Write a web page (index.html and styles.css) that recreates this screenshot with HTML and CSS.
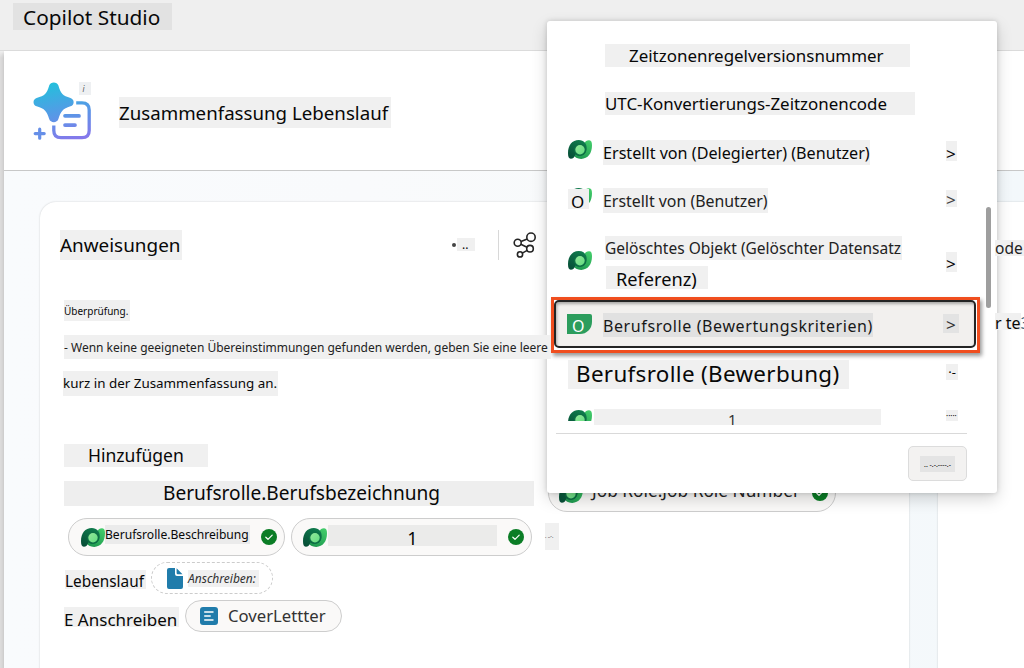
FILE: index.html
```html
<!DOCTYPE html>
<html lang="de">
<head>
<meta charset="utf-8">
<title>Copilot Studio</title>
<link rel="stylesheet" href="styles.css">
</head>
<body>
<svg class="defs" width="0" height="0" aria-hidden="true">
  <defs>
    <linearGradient id="gDark" x1="0.6" y1="0" x2="0" y2="1"><stop offset="0" stop-color="#0f7a4c"/><stop offset="1" stop-color="#064a35"/></linearGradient>
    <linearGradient id="gLeaf" x1="1" y1="0" x2="0.4" y2="1"><stop offset="0" stop-color="#45d06c"/><stop offset="1" stop-color="#1f9a50"/></linearGradient>
    <linearGradient id="gCore" x1="0" y1="0" x2="1" y2="1"><stop offset="0" stop-color="#94e89a"/><stop offset="1" stop-color="#62dc80"/></linearGradient>
    <symbol id="dataverse" viewBox="0 0 24 19">
      <path fill="url(#gLeaf)" d="M21.2.3C23.5.4 24 2.4 24 5.6 24 13.4 19.9 18.9 13.2 18.9 9.2 18.9 6.4 17.2 5.6 15L16.5 3.5C17.2 1.3 19 .2 21.2.3Z"/>
      <path fill="url(#gDark)" d="M10.8 0C15.9 0 19 3.6 18.7 8.8 18.4 13.2 15.6 15.7 12.2 15.8 10.2 15.8 8.6 15.2 7.4 14.2 6.6 17.2 5 18.7 2.8 18.7.7 18.7 0 16.7 0 13.1 0 5.3 4.2 0 10.8 0Z"/>
      <circle cx="12" cy="9.7" r="6.1" fill="#0d7045"/>
      <circle cx="12" cy="9.7" r="4.7" fill="url(#gCore)"/>
    </symbol>
    <symbol id="check" viewBox="0 0 16 16">
      <circle cx="8" cy="8" r="8" fill="#0b7d26"/>
      <path d="M4.8 8.2 7 10.3 11.2 6.1" fill="none" stroke="#fff" stroke-width="1.2" stroke-linecap="round" stroke-linejoin="round"/>
    </symbol>
  </defs>
</svg>

<div class="app">
  <header class="topbar"><span class="tag brand">Copilot Studio</span></header>
  <main class="panel">
    <section class="title-bar">
      <svg class="logo" viewBox="0 0 60 60">
        <defs><linearGradient id="gLogo" gradientUnits="userSpaceOnUse" x1="25" y1="0" x2="38" y2="58"><stop offset="0" stop-color="#24bfdc"/><stop offset=".5" stop-color="#549be6"/><stop offset="1" stop-color="#8578eb"/></linearGradient></defs>
        <path fill="url(#gLogo)" d="M16.2 3.5C17.5-.5 24.1-.5 25.4 3.5 28 12 29.5 13.6 37.5 16 41.7 17.3 41.7 23 37.5 24.3 29.5 26.8 28 29.3 25.4 37 24.1 41.2 17.5 41.2 16.2 37 13.6 29.3 12.1 26.8 3.6 24.3-.5 23-.5 17.3 3.6 16 12.1 13.6 13.6 12 16.2 3.5Z"/>
        <path fill="none" stroke="url(#gLogo)" stroke-width="3.3" d="M43.2 20.8H49Q56.2 20.8 56.2 28V48.5Q56.2 55.7 49 55.7H28Q20.8 55.7 20.8 48.5V43.5"/>
        <path fill="none" stroke="url(#gLogo)" stroke-width="3.7" stroke-linecap="round" d="M32 33.8 46 33.9M32 43.1 42 43.2"/>
        <path fill="none" stroke="#668fe8" stroke-width="3.2" stroke-linecap="round" d="M2.2 51.6H11.2M6.7 47.2V56.2"/>
      </svg>
      <span class="tag logo-mark">i</span>
      <h1 class="tag page-title">Zusammenfassung Lebenslauf</h1>
    </section>
    <section class="workspace">
      <article class="card">
        <div class="card-head">
          <h2 class="tag card-title">Anweisungen</h2>
          <span class="dot"></span><span class="tag more">..</span>
          <span class="rule"></span>
          <svg class="share" viewBox="0 0 24 26" fill="none" stroke="#242424" stroke-width="1.6">
            <circle cx="18" cy="5.2" r="4.2"/><circle cx="4.7" cy="10.7" r="3.5"/><circle cx="17" cy="16.7" r="3.3"/><circle cx="7" cy="22.4" r="2.6"/>
            <path d="M8 9.4 14.2 6.9M7.8 12.3 14 15.3M14.2 18.4 9.3 21.1"/>
          </svg>
        </div>
        <p class="tag check-text">Überprüfung.</p>
        <p class="tag long-text">- Wenn keine geeigneten Übereinstimmungen gefunden werden, geben Sie eine leere</p>
        <p class="tag short-text">kurz in der Zusammenfassung an.</p>
        <p class="tag add-text">Hinzufügen</p>
        <div class="line line-job">
          <span class="tag job-name">Berufsrolle.Berufsbezeichnung</span>
          <span class="pill pill-number"><svg class="dv"><use href="#dataverse"/></svg><span class="number-text">Job Role.Job Role Number</span><svg class="ok"><use href="#check"/></svg></span>
        </div>
        <div class="line line-pills">
          <span class="pill pill-desc"><svg class="dv"><use href="#dataverse"/></svg><span class="tag desc-text">Berufsrolle.Beschreibung</span><svg class="ok"><use href="#check"/></svg></span>
          <span class="pill pill-one"><svg class="dv"><use href="#dataverse"/></svg><span class="tag one-text">1</span><svg class="ok"><use href="#check"/></svg></span>
          <span class="tag scrap">. ..-.</span>
        </div>
        <div class="line line-resume">
          <span class="tag resume-text">Lebenslauf</span>
          <span class="pill-dashed">
            <svg class="doc" viewBox="0 0 16 21"><path fill="#207cab" d="M2 0H8V6Q8 8 10 8H16V19Q16 21 14 21H2Q0 21 0 19V2Q0 0 2 0ZM9.6.3 15.5 6.3H10.8Q9.6 6.3 9.6 5Z"/></svg>
            <em class="tag letter-text">Anschreiben:</em>
          </span>
        </div>
        <div class="line line-cover">
          <span class="tag cover-label">E Anschreiben</span>
          <span class="pill pill-cover">
            <svg class="note" viewBox="0 0 18 18"><rect width="18" height="18" rx="3" fill="#207cab"/><path d="M4.2 5H13.5M4.2 9H10.7M4.2 13H13.5" stroke="#fff" stroke-width="1.3"/></svg>
            <span class="cover-text">CoverLettter</span>
          </span>
        </div>
      </article>
      <aside class="card side">
        <p class="tag side-one">ode</p>
        <p class="tag side-two">r te<span class="side-cut">3</span></p>
      </aside>
    </section>
  </main>

  <div class="popup">
    <div class="row r-zone"><span class="tag">Zeitzonenregelversionsnummer</span></div>
    <div class="row r-utc"><span class="tag">UTC-Konvertierungs-Zeitzonencode</span></div>
    <div class="row r-deleg"><svg class="dv"><use href="#dataverse"/></svg><span class="tag label">Erstellt von (Delegierter) (Benutzer)</span><span class="tag chev">&gt;</span></div>
    <div class="row r-user"><span class="mini"><svg class="dv"><use href="#dataverse"/></svg><span class="tag mini-o">O</span></span><span class="tag label">Erstellt von (Benutzer)</span><span class="tag chev">&gt;</span></div>
    <div class="row r-deleted"><svg class="dv"><use href="#dataverse"/></svg>
      <div class="two"><span class="tag two-a">Gelöschtes Objekt (Gelöschter Datensatz</span><span class="tag two-b">Referenz)</span></div>
      <span class="tag chev">&gt;</span></div>
    <div class="marker"><div class="selected">
      <span class="green-o">O</span><span class="tag sel-label">Berufsrolle (Bewertungskriterien)</span><span class="tag sel-chev">&gt;</span>
    </div></div>
    <div class="row r-apply"><span class="tag apply">Berufsrolle (Bewerbung)</span><span class="tag bits">·-</span></div>
    <div class="row r-last"><span class="clip"><svg class="dv"><use href="#dataverse"/></svg></span><span class="tag last-one">1</span><span class="tag bits-small">·····</span></div>
    <div class="divider"></div>
    <button class="foot-btn"><span class="tag">.. -.-.----.-</span></button>
    <span class="thumb"></span>
  </div>
</div>
</body>
</html>
```
FILE: styles.css
```css
* { box-sizing: border-box; }
body { margin: 0; font-family: "Noto Sans", sans-serif; color: #080808; }
h1, h2, p { margin: 0; font-weight: 400; }
.defs { position: absolute; }
svg { display: block; flex: none; }
.app { position: relative; width: 1024px; height: 668px; overflow: hidden; background: linear-gradient(#efefef 51px, #dddcdc 58px); }

.tag { display: flex; flex: none; align-items: center; background: #f0f0f0; white-space: pre; line-height: 1; }
.dv { width: 24px; height: 19px; }
.ok { width: 16px; height: 16px; }

.topbar { height: 51px; padding: 3px 0 0 13px; border-bottom: 1px solid #dcdcdc; }
.brand { width: 159px; height: 27px; padding: 1px 0 0 10px; background: #e2e2e2; font-size: 20.8px; }
.panel { margin-left: 4px; height: 617px; background: #fff; box-shadow: -1px 2px 3px rgba(0,0,0,.1); }
.title-bar { display: flex; height: 120px; border-bottom: 1px solid #c8c8c8; }
.logo { width: 60px; height: 60px; margin: 31px 0 0 29px; }
.logo-mark { width: 12px; height: 13px; margin: 31px 0 0 -14px; z-index: 1; justify-content: center; font-size: 8px; font-style: italic; color: #555; background: #eef0f2; padding-right: 3px; }
.page-title { width: 272px; height: 31px; margin: 46px 0 0 28px; padding-top: 2px; font-size: 18.7px; }

.workspace { display: flex; gap: 29px; height: 497px; padding: 31px 0 0 36px; background: linear-gradient(90deg, #f9fbfd 0, #f9fafc 35%, #f8fafb 60%, #f3f8fb 100%); }
.card { flex: none; width: 869px; height: 480px; border-radius: 16px 16px 0 0; background: #fff; box-shadow: 0 0 2px rgba(0,0,0,.2); }
.card-head { display: flex; padding: 28px 0 0 20px; height: 58px; }
.card-title { width: 122px; height: 30px; font-size: 18.9px; }
.dot { width: 4px; height: 4px; border-radius: 50%; margin: 13px 0 0 270px; background: #444; }
.more { width: 18px; height: 13px; margin: 8px 0 0 1px; padding-left: 5px; font-size: 12px; }
.rule { width: 1px; height: 30px; margin-left: 23px; background: #d8d8d8; }
.share { width: 24px; height: 26px; margin: 2px 0 0 14px; }
.check-text { width: 66px; height: 21px; margin: 40px 0 0 24px; padding-top: 1px; font-size: 10px; }
.long-text { position: relative; z-index: 3; width: 487px; height: 24px; margin: 14px 0 0 24px; padding-top: 2px; font-size: 12px; color: #222; }
.short-text { width: 215px; height: 25px; margin: 12px 0 0 23px; padding-top: 1px; font-size: 13.4px; }
.add-text { width: 144px; height: 23px; margin: 48px 0 0 24px; padding-left: 24px; font-size: 17.55px; }
.line { display: flex; }
.pill { display: flex; flex: none; height: 38px; border: 1px solid #cdcdcd; border-radius: 19px; background: #faf9f8; }
.pill .dv { margin: 9px 0 0 11px; }
.pill .ok { margin-top: 10px; }
.line-job { height: 45px; margin: 7px 0 0 24px; }
.job-name { width: 470px; height: 25px; margin-top: 7px; padding: 1px 0 0 99px; font-size: 19.1px; background: #eee; }
.pill-number { width: 288px; margin-left: 14px; align-items: flex-start; }
.pill-number .dv { margin-left: 10px; }
.number-text { margin: 4px 0 0 9px; width: 220px; font-size: 17.3px; line-height: 24px; white-space: nowrap; color: #242424; }
.line-pills { height: 38px; margin: -1px 0 0 28px; }
.pill-desc { width: 217px; }
.pill-desc .dv { margin-left: 11.5px; }
.desc-text { width: 145px; height: 19px; margin: 6px 0 0 .5px; padding-top: 1px; font-size: 12.1px; background: #ebebeb; }
.pill-desc .ok { margin-left: 11px; }
.pill-one { width: 241px; margin-left: 6px; }
.one-text { width: 169px; height: 21px; margin: 6px 11px 0 1px; justify-content: center; padding-top: 4px; font-size: 18px; background: #ebebea; }
.scrap { width: 14px; height: 27px; margin: 5px 0 0 13px; font-size: 5px; color: #222; }
.line-resume { height: 32px; margin: 6px 0 0 25px; }
.resume-text { width: 81px; height: 19px; margin-top: 8px; padding-top: 4px; font-size: 15.35px; }
.pill-dashed { display: flex; width: 122px; height: 32px; margin-left: 5px; border: 1px dashed #ccc; border-radius: 16px; }
.doc { width: 16px; height: 21px; margin: 5px 0 0 15px; }
.letter-text { width: 71px; height: 17px; margin: 7px 0 0 5px; padding-top: 1px; font-size: 12px; color: #333; }
.line-cover { height: 32px; margin: 6px 0 0 24px; }
.cover-label { width: 115px; height: 20px; margin-top: 7px; padding-top: 5px; font-size: 17px; }
.pill-cover { width: 157px; height: 32px; margin-left: 6px; }
.note { width: 18px; height: 18px; margin: 6px 0 0 14px; }
.cover-text { margin: 3px 0 0 10px; font-size: 16.7px; line-height: 24px; color: #333; }
.side { width: 300px; }
.side .tag { position: relative; z-index: 3; height: 16px; padding-top: 1px; font-size: 15.5px; }
.side-one { width: 29px; margin: 38px 0 0 57px; color: #222; }
.side .side-two { width: 26px; margin: 57px 0 0 57px; height: 17px; padding-top: 2px; font-size: 16px; }
.side-cut { color: #35617e; }

.popup { position: absolute; z-index: 2; left: 547px; top: 21px; width: 450px; height: 472px; border-radius: 3px; background: #fff; box-shadow: 0 6px 16px rgba(0,0,0,.17), 0 0 5px rgba(0,0,0,.16); }
.row { display: flex; padding-left: 21px; }
.r-zone { padding: 23px 0 0 58px; }
.r-zone .tag { width: 305px; height: 23px; padding: 2px 0 0 24px; font-size: 16.95px; }
.r-utc { padding: 25px 0 0 58px; }
.r-utc .tag { width: 310px; height: 23px; padding-top: 2px; font-size: 16.9px; }
.chev { width: 11px; height: 20px; margin: 1px 40px 0 auto; font-size: 17px; padding-top: 4px; }
.label { margin-left: 11px; height: 25px; padding-top: 2px; }
.r-deleg { margin-top: 25px; height: 25px; }
.r-deleg .label { width: 267px; font-size: 16.15px; }
.r-user { margin-top: 23px; height: 25px; }
.r-user .label { width: 165px; font-size: 15.9px; color: #222; }
.r-user .chev { height: 17px; color: #444; margin-top: 2px; padding-top: 2px; }
.mini { position: relative; width: 24px; height: 22px; }
.mini-o { position: absolute; left: 0; top: 1px; width: 21px; height: 20px; padding: 4px 0 0 3px; font-size: 17px; }
.r-deleted { margin-top: 23px; height: 53px; }
.r-deleted .dv { margin-top: 15px; }
.r-deleted .chev { margin-top: 16px; padding-top: 2px; }
.two { margin-left: 13px; }
.two-a { width: 297px; height: 24px; padding-top: 2px; font-size: 15.5px; color: #222; }
.two-b { width: 102px; height: 23px; margin: 6px 0 0 1px; padding: 3px 0 0 10px; font-size: 18.2px; }
.marker { width: 429px; height: 56px; margin: 8px 0 0 4px; padding: 0 1px 2px 0; border: 3px solid #f04e1f; background: #fff; box-shadow: 2px 3px 4px rgba(0,0,0,.4); }
.selected { display: flex; height: 48px; border: 2px solid #242424; border-radius: 5px; background: #f2f0ee; box-shadow: inset 1px 2px 3px rgba(0,0,0,.3); }
.green-o { width: 25px; height: 20px; margin: 12px 0 0 11px; padding-left: 5px; border-radius: 0 2px 12px 0; background: #2c9d5d; color: #fff; font-size: 16px; line-height: 25px; }
.sel-label { width: 270px; height: 24px; margin: 11px 0 0 11px; padding-top: 1px; font-size: 16px; letter-spacing: .6px; background: #e1e1e1; color: #181818; }
.sel-chev { width: 16px; height: 19px; margin: 12px 15px 0 auto; padding: 2px 0 0 3px; font-size: 17px; background: #e3e3e3; color: #333; }
.r-apply { margin-top: 7px; height: 29px; }
.apply { width: 281px; height: 29px; padding: 0 0 0 8px; font-size: 22.4px; letter-spacing: .33px; }
.bits { width: 12px; height: 16px; margin: 4px 39px 0 auto; font-size: 13px; justify-content: center; }
.r-last { margin-top: 20px; height: 16px; }
.clip { height: 12px; padding-top: 1px; overflow: hidden; }
.last-one { width: 287px; height: 16px; margin-left: 2px; padding: 4px 0 0 134px; font-size: 15px; color: #333; }
.bits-small { width: 12px; height: 11px; margin: 1px 39px 0 auto; font-size: 8px; }
.divider { width: 411px; height: 1px; margin: 8px 0 0 9px; background: #d9d9d9; }
.foot-btn { display: flex; width: 59px; height: 35px; margin: 12px 0 0 361px; padding: 9px 0 0 11px; border: 1px solid #dcdcdc; border-radius: 5px; background: #f3f2f1; font-family: inherit; }
.foot-btn .tag { width: 35px; height: 16px; justify-content: center; background: #e4e4e4; font-size: 7px; }
.thumb { position: absolute; left: 439px; top: 186px; width: 5px; height: 101px; border-radius: 3px; background: #9e9e9e; }
```
